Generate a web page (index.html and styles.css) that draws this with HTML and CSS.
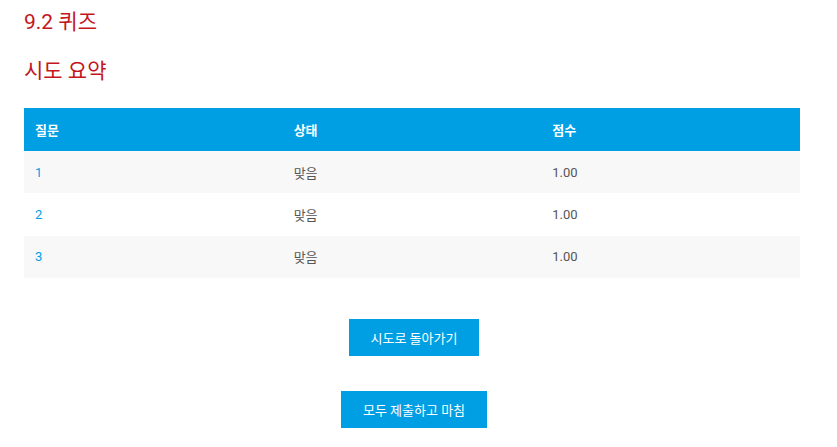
FILE: index.html
```html
<!DOCTYPE html>
<html lang="ko">
<head>
<meta charset="utf-8">
<link rel="stylesheet" href="styles.css">
</head>
<body>
<div class="page">
  <h2 class="title">9.2 퀴즈</h2>
  <h3 class="subtitle">시도 요약</h3>
  <table class="summary">
    <thead>
      <tr><th>질문</th><th>상태</th><th>점수</th></tr>
    </thead>
    <tbody>
      <tr><td><a href="#">1</a></td><td>맞음</td><td>1.00</td></tr>
      <tr><td><a href="#">2</a></td><td>맞음</td><td>1.00</td></tr>
      <tr><td><a href="#">3</a></td><td>맞음</td><td>1.00</td></tr>
    </tbody>
  </table>
  <div class="actions">
    <button class="btn">시도로 돌아가기</button>
    <button class="btn">모두 제출하고 마침</button>
  </div>
</div>
</body>
</html>
```
FILE: styles.css
```css
html, body { margin: 0; padding: 0; background: #fff; }
body { font-family: Roboto, "Noto Sans CJK KR", sans-serif; color: #333; }
.page { padding: 7px 33px 0 24px; }
.title { margin: 0; font-size: 21px; font-weight: 400; color: #c4161c; line-height: 30px; }
.subtitle { margin: 19px 0 0; font-size: 21px; font-weight: 400; color: #c4161c; line-height: 30px; }
.summary { margin-top: 22px; width: 776px; border-collapse: collapse; table-layout: fixed; font-size: 13px; }
.summary th { background: #009fe3; color: #fff; font-weight: 700; text-align: left; height: 43px; padding: 0 11px; }
.summary td { height: 42.4px; padding: 0 11px; color: #555; }
.summary tbody tr:nth-child(odd) td { background: #f8f8f8; }
.summary a { color: #009fe3; text-decoration: none; }
.actions { display: flex; flex-direction: column; align-items: center; gap: 35px; margin-top: 41px; }
.btn { background: #009fe3; color: #fff; border: 0; font-family: Roboto, "Noto Sans CJK KR", sans-serif; font-size: 13px; height: 37px; padding: 0 22px; }
```
